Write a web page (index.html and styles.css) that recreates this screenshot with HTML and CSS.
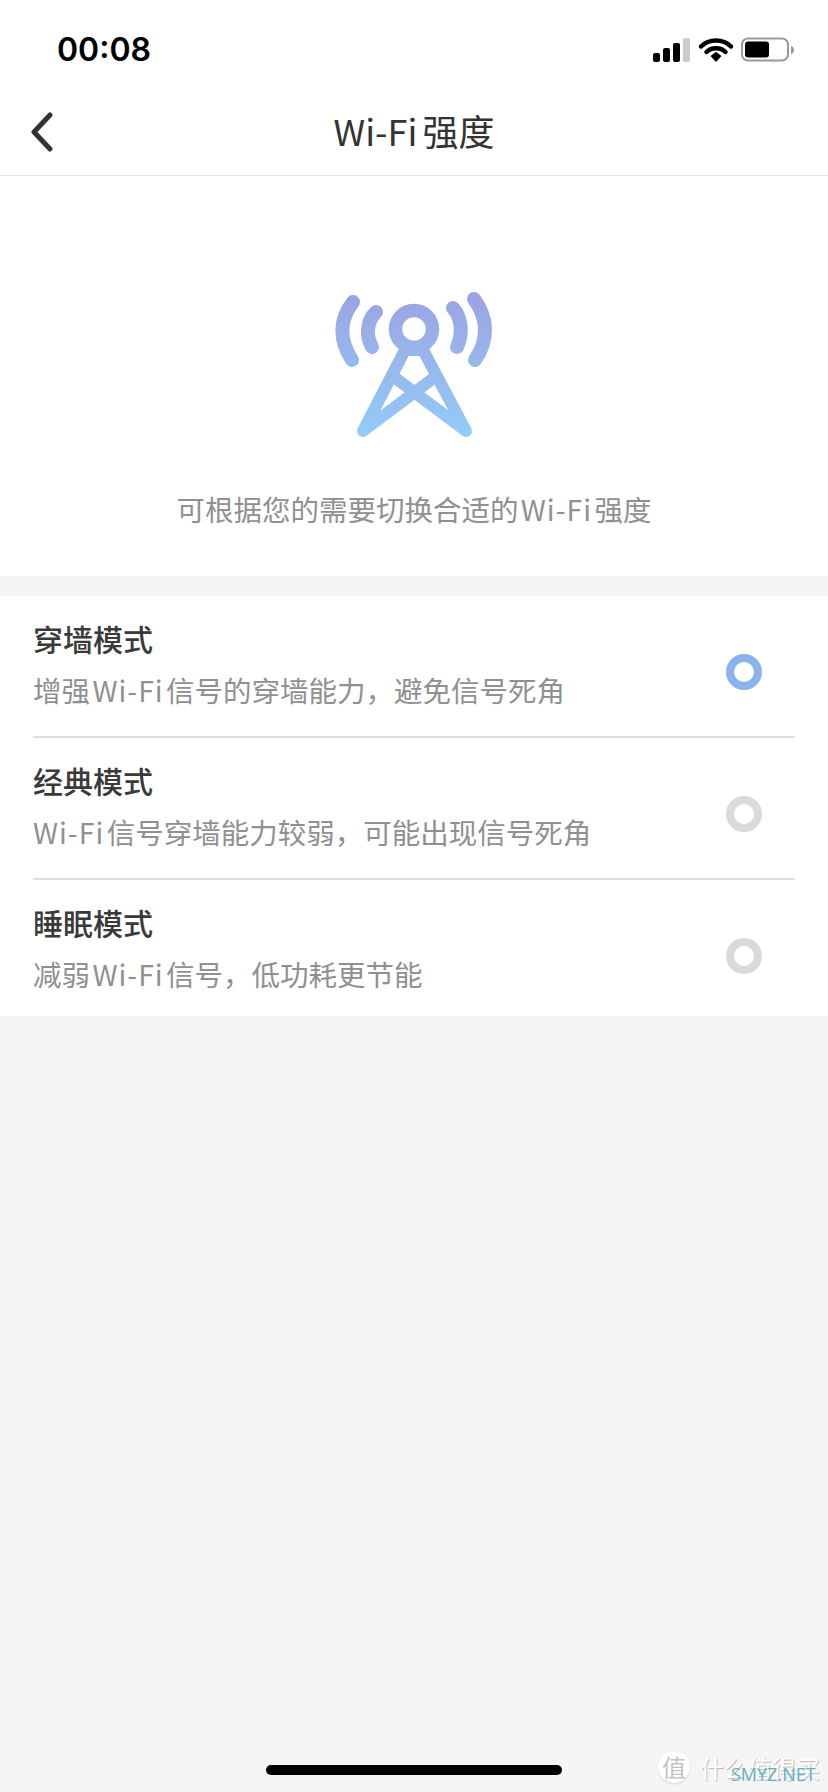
FILE: index.html
```html
<!DOCTYPE html>
<html lang="zh-CN">
<head>
  <meta charset="UTF-8">
  <meta name="viewport" content="width=device-width, initial-scale=1.0">
  <title>Wi-Fi强度</title>
  <link rel="stylesheet" href="styles.css">
</head>
<body>
  <div class="status-bar">
    <span class="time">00:08</span>
    <svg class="status-icons" width="144" height="28" viewBox="0 0 144 28">
      <rect x="0" y="17" width="7" height="9" rx="2" fill="#000"/>
      <rect x="10" y="12" width="7" height="14" rx="2" fill="#000"/>
      <rect x="20" y="7" width="7" height="19" rx="2" fill="#000"/>
      <rect x="30" y="2" width="7" height="24" rx="1.5" fill="#ccc"/>
      <path d="M48 10.5 C56 2.5 70 2.5 78 10.5" fill="none" stroke="#000" stroke-width="4.5" stroke-linecap="round"/>
      <path d="M53.5 16 C58.500 11 67.500 11 72.500 16" fill="none" stroke="#000" stroke-width="4.500" stroke-linecap="round"/>
      <path d="M57.500 20 L63 15.800 L68.500 20 L63 26 Z" fill="#000"/>
      <rect x="89" y="2.500" width="46" height="22" rx="6" fill="none" stroke="#999" stroke-width="2"/>
      <rect x="92" y="5.500" width="24" height="16" rx="3" fill="#000"/>
      <path d="M138 10 C140 10.500 141 12 141 14 C141 16 140 17.500 138 18 Z" fill="#999"/>
    </svg>
  </div>

  <div class="nav-bar">
    <svg class="back-icon" width="24" height="40" viewBox="0 0 24 40">
      <path d="M20 3 L4 20 L20 37" fill="none" stroke="#333" stroke-width="5" stroke-linecap="round" stroke-linejoin="round"/>
    </svg>
    <h1 class="nav-title">Wi-Fi 强度</h1>
  </div>

  <div class="hero">
    <svg class="tower" width="210" height="180" viewBox="0 0 210 180">
      <defs>
        <linearGradient id="towerFill" gradientUnits="userSpaceOnUse" x1="0" y1="30" x2="0" y2="166">
          <stop offset="0" stop-color="#9aa5e4"/>
          <stop offset="1" stop-color="#93ccf7"/>
        </linearGradient>
      </defs>
      <g fill="none" stroke="url(#towerFill)" stroke-linecap="round" stroke-linejoin="round">
        <circle cx="104" cy="59" r="18.500" stroke-width="13.500"/>
        <g stroke-width="12">
          <path d="M95 80 L53 161 L125 107"/>
          <path d="M113 80 L156 161 L84 107"/>
          <path d="M95 80 H113"/>
        </g>
        <g stroke-width="14">
          <path d="M43 32 C29 50 29 70 42 90"/>
          <path d="M66 42 C56 52 56 66 62 77"/>
          <path d="M143 38 C152 48 153 64 147 77"/>
          <path d="M164 29 C178 48 179 70 165 90"/>
        </g>
      </g>
    </svg>
    <p class="hero-text">可根据您的需要切换合适的 <span class="latin">Wi-Fi</span> 强度</p>
  </div>

  <div class="mode-list">
    <div class="mode">
      <div class="mode-text">
        <h3>穿墙模式</h3>
        <p>增强 <span class="latin">Wi-Fi</span> 信号的穿墙能力，避免信号死角</p>
      </div>
      <span class="radio radio-on"></span>
    </div>
    <div class="mode">
      <div class="mode-text">
        <h3>经典模式</h3>
        <p><span class="latin">Wi-Fi</span> 信号穿墙能力较弱，可能出现信号死角</p>
      </div>
      <span class="radio"></span>
    </div>
    <div class="mode">
      <div class="mode-text">
        <h3>睡眠模式</h3>
        <p>减弱 <span class="latin">Wi-Fi</span> 信号，低功耗更节能</p>
      </div>
      <span class="radio"></span>
    </div>
  </div>

  <div class="home-bar"></div>

  <div class="watermark">
    <span class="wm-badge">值</span>
    <span class="wm-name">什么值得买</span>
    <span class="wm-site">SMYZ.NET</span>
  </div>
</body>
</html>
```

FILE: styles.css
```css
html, body {
  height: 100%;
}
body {
  font-family: "Noto Sans CJK SC", "Noto Sans", sans-serif;
  margin: 0;
  padding: 0;
  min-height: 1792px;
  background-color: #f5f5f5;
  position: relative;
  overflow: hidden;
}
.latin {
  letter-spacing: 1px;
}
.status-bar {
  height: 88px;
  background-color: #fff;
  display: flex;
  align-items: center;
  justify-content: space-between;
  padding: 12px 31px 0 57px;
  box-sizing: border-box;
}
.time {
  font-family: Inter, sans-serif;
  font-size: 32px;
  font-weight: 600;
  color: #000;
  margin-top: -1px;
}
.status-icons {
  display: block;
  margin-top: -1px;
}
.nav-bar {
  height: 87px;
  background-color: #fff;
  border-bottom: 1px solid #e3e3e3;
  box-sizing: content-box;
  display: flex;
  align-items: center;
  justify-content: center;
  position: relative;
}
.back-icon {
  position: absolute;
  left: 30px;
  top: 24px;
}
.nav-title {
  margin: -3px 0 0;
  font-size: 36px;
  font-weight: 400;
  color: #333;
  word-spacing: -3px;
}
.hero {
  height: 400px;
  background-color: #fff;
  display: flex;
  flex-direction: column;
  align-items: center;
  padding-top: 94px;
  box-sizing: border-box;
}
.tower {
  display: block;
  margin-left: 2px;
}
.hero-text {
  margin: 39px 0 0;
  font-size: 28.5px;
  line-height: 40px;
  color: #909090;
  word-spacing: -4px;
}
.mode-list {
  margin-top: 20px;
  background-color: #fff;
  padding: 0 33px;
}
.mode {
  height: 142px;
  box-sizing: border-box;
  display: flex;
  justify-content: space-between;
  align-items: flex-start;
  border-bottom: 2px solid #e0e0e4;
  padding-top: 21px;
}
.mode:last-child {
  height: 136px;
  border-bottom: none;
}
.mode-text h3 {
  margin: 0;
  font-size: 30px;
  line-height: 42px;
  font-weight: 500;
  color: #3a3a3a;
}
.mode-text p {
  margin: 11px 0 0;
  font-size: 28.5px;
  line-height: 40px;
  color: #909090;
  word-spacing: -4px;
}
.radio {
  width: 36px;
  height: 36px;
  box-sizing: border-box;
  border: 8px solid #dadada;
  border-radius: 50%;
  margin: 37px 33px 0 0;
}
.radio-on {
  border-color: #88b4ec;
}
.home-bar {
  position: absolute;
  left: 266px;
  bottom: 17px;
  width: 296px;
  height: 10px;
  border-radius: 5px;
  background-color: #000;
}
.watermark {
  position: absolute;
  left: 658px;
  top: 1749px;
  width: 165px;
  height: 36px;
  display: flex;
  align-items: center;
}
.wm-badge {
  width: 32px;
  height: 32px;
  border-radius: 50%;
  background-color: #fff;
  color: #c4c4c4;
  font-size: 24px;
  line-height: 32px;
  text-align: center;
  box-shadow: 0 1px 2px rgba(0, 0, 0, 0.15);
}
.wm-name {
  margin-left: 10px;
  font-size: 24px;
  color: #fff;
  text-shadow: 1px 1px 1px rgba(0, 0, 0, 0.25);
  white-space: nowrap;
}
.wm-site {
  position: absolute;
  left: 73px;
  top: 15px;
  font-family: "Open Sans", sans-serif;
  font-size: 18px;
  line-height: 20px;
  color: #62b1c6;
  white-space: nowrap;
}
```
